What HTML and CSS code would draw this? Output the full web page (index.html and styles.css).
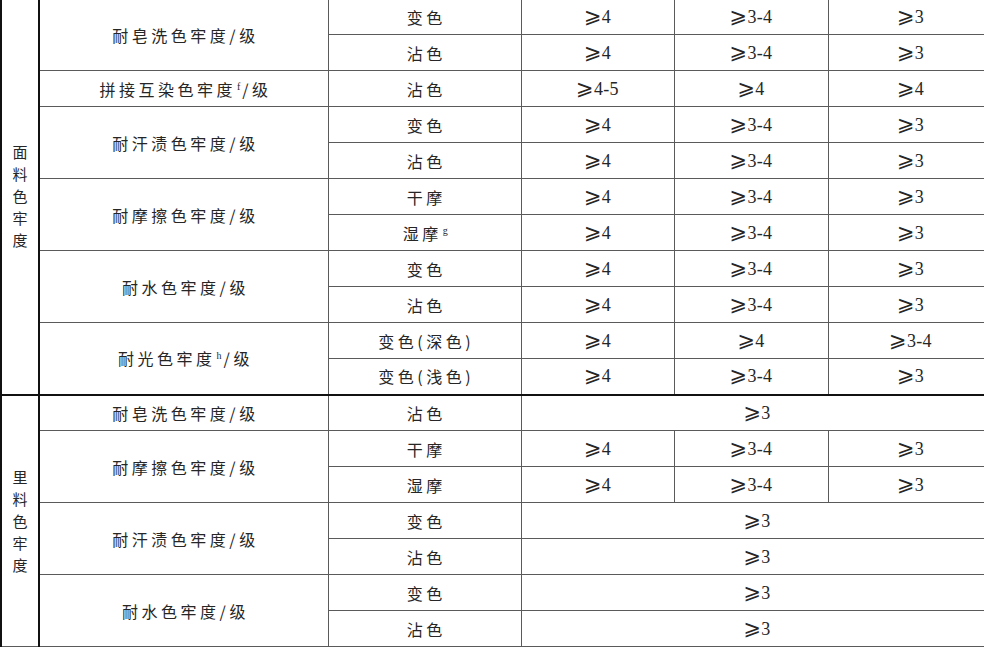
FILE: index.html
```html
<!DOCTYPE html>
<html lang="zh-CN">
<head>
<meta charset="utf-8">
<title>色牢度</title>
<link rel="stylesheet" href="styles.css">
</head>
<body>
<table class="spec">
  <colgroup>
    <col class="c-group"><col class="c-item"><col class="c-sub"><col class="c-v"><col class="c-v2"><col class="c-v3">
  </colgroup>
  <tbody>
    <tr>
      <td class="group" rowspan="11"><span class="vtext">面<br>料<br>色<br>牢<br>度</span></td>
      <td class="cn" rowspan="2">耐皂洗色牢度/级</td>
      <td class="cn">变色</td>
      <td class="num"><span class="ge">⩾</span>4</td><td class="num"><span class="ge">⩾</span>3-4</td><td class="num"><span class="ge">⩾</span>3</td>
    </tr>
    <tr>
      <td class="cn">沾色</td>
      <td class="num"><span class="ge">⩾</span>4</td><td class="num"><span class="ge">⩾</span>3-4</td><td class="num"><span class="ge">⩾</span>3</td>
    </tr>
    <tr>
      <td class="cn">拼接互染色牢度<sup>f</sup>/级</td>
      <td class="cn">沾色</td>
      <td class="num"><span class="ge">⩾</span>4-5</td><td class="num"><span class="ge">⩾</span>4</td><td class="num"><span class="ge">⩾</span>4</td>
    </tr>
    <tr>
      <td class="cn" rowspan="2">耐汗渍色牢度/级</td>
      <td class="cn">变色</td>
      <td class="num"><span class="ge">⩾</span>4</td><td class="num"><span class="ge">⩾</span>3-4</td><td class="num"><span class="ge">⩾</span>3</td>
    </tr>
    <tr>
      <td class="cn">沾色</td>
      <td class="num"><span class="ge">⩾</span>4</td><td class="num"><span class="ge">⩾</span>3-4</td><td class="num"><span class="ge">⩾</span>3</td>
    </tr>
    <tr>
      <td class="cn" rowspan="2">耐摩擦色牢度/级</td>
      <td class="cn">干摩</td>
      <td class="num"><span class="ge">⩾</span>4</td><td class="num"><span class="ge">⩾</span>3-4</td><td class="num"><span class="ge">⩾</span>3</td>
    </tr>
    <tr>
      <td class="cn">湿摩<sup>g</sup></td>
      <td class="num"><span class="ge">⩾</span>4</td><td class="num"><span class="ge">⩾</span>3-4</td><td class="num"><span class="ge">⩾</span>3</td>
    </tr>
    <tr>
      <td class="cn" rowspan="2">耐水色牢度/级</td>
      <td class="cn">变色</td>
      <td class="num"><span class="ge">⩾</span>4</td><td class="num"><span class="ge">⩾</span>3-4</td><td class="num"><span class="ge">⩾</span>3</td>
    </tr>
    <tr>
      <td class="cn">沾色</td>
      <td class="num"><span class="ge">⩾</span>4</td><td class="num"><span class="ge">⩾</span>3-4</td><td class="num"><span class="ge">⩾</span>3</td>
    </tr>
    <tr>
      <td class="cn" rowspan="2">耐光色牢度<sup>h</sup>/级</td>
      <td class="cn">变色(深色)</td>
      <td class="num"><span class="ge">⩾</span>4</td><td class="num"><span class="ge">⩾</span>4</td><td class="num"><span class="ge">⩾</span>3-4</td>
    </tr>
    <tr>
      <td class="cn">变色(浅色)</td>
      <td class="num"><span class="ge">⩾</span>4</td><td class="num"><span class="ge">⩾</span>3-4</td><td class="num"><span class="ge">⩾</span>3</td>
    </tr>
    <tr class="split">
      <td class="group" rowspan="7"><span class="vtext">里<br>料<br>色<br>牢<br>度</span></td>
      <td class="cn">耐皂洗色牢度/级</td>
      <td class="cn">沾色</td>
      <td class="num" colspan="3"><span class="ge">⩾</span>3</td>
    </tr>
    <tr>
      <td class="cn" rowspan="2">耐摩擦色牢度/级</td>
      <td class="cn">干摩</td>
      <td class="num"><span class="ge">⩾</span>4</td><td class="num"><span class="ge">⩾</span>3-4</td><td class="num"><span class="ge">⩾</span>3</td>
    </tr>
    <tr>
      <td class="cn">湿摩</td>
      <td class="num"><span class="ge">⩾</span>4</td><td class="num"><span class="ge">⩾</span>3-4</td><td class="num"><span class="ge">⩾</span>3</td>
    </tr>
    <tr>
      <td class="cn" rowspan="2">耐汗渍色牢度/级</td>
      <td class="cn">变色</td>
      <td class="num" colspan="3"><span class="ge">⩾</span>3</td>
    </tr>
    <tr>
      <td class="cn">沾色</td>
      <td class="num" colspan="3"><span class="ge">⩾</span>3</td>
    </tr>
    <tr>
      <td class="cn" rowspan="2">耐水色牢度/级</td>
      <td class="cn">变色</td>
      <td class="num" colspan="3"><span class="ge">⩾</span>3</td>
    </tr>
    <tr>
      <td class="cn">沾色</td>
      <td class="num" colspan="3"><span class="ge">⩾</span>3</td>
    </tr>
  </tbody>
</table>
</body>
</html>
```
FILE: styles.css
```css
html, body {
  margin: 0;
  padding: 0;
  background: #fff;
  overflow: hidden;
}
.spec {
  border-collapse: collapse;
  table-layout: fixed;
  width: 992px;
  margin-top: -2px;
  color: #262626;
  font-family: "Noto Sans CJK SC", "Liberation Serif", serif;
  font-size: 16px;
}
.c-group { width: 38px; }
.c-item { width: 289px; }
.c-sub { width: 193px; }
.c-v { width: 153px; }
.c-v2 { width: 154px; }
.c-v3 { width: 165px; }
.spec tr {
  height: 36px;
}
.spec td {
  padding: 0;
  border: 1px solid #5a5a5a;
  text-align: center;
  vertical-align: middle;
  line-height: 20px;
}
.spec td.group {
  border-left: 2px solid #111;
  border-right: 2px solid #111;
}
.spec tr.split td {
  border-top: 2px solid #111;
}
.cn {
  letter-spacing: 3.5px;
  padding-left: 3.5px !important;
  font-weight: 400;
}
.cn sup {
  font-family: "Liberation Serif", serif;
  font-size: 10px;
  letter-spacing: 0;
  line-height: 0;
  vertical-align: 6px;
  margin-left: 1px;
  margin-right: 2px;
}
.num {
  font-family: "Liberation Serif", serif;
  font-size: 18px;
  letter-spacing: 0.3px;
}
.ge {
  font-family: "DejaVu Sans", serif;
  font-size: 21px;
  line-height: 0;
  margin-right: 0;
}
.vtext {
  display: inline-block;
  font-size: 15px;
  line-height: 22px;
  letter-spacing: 0;
}
```
